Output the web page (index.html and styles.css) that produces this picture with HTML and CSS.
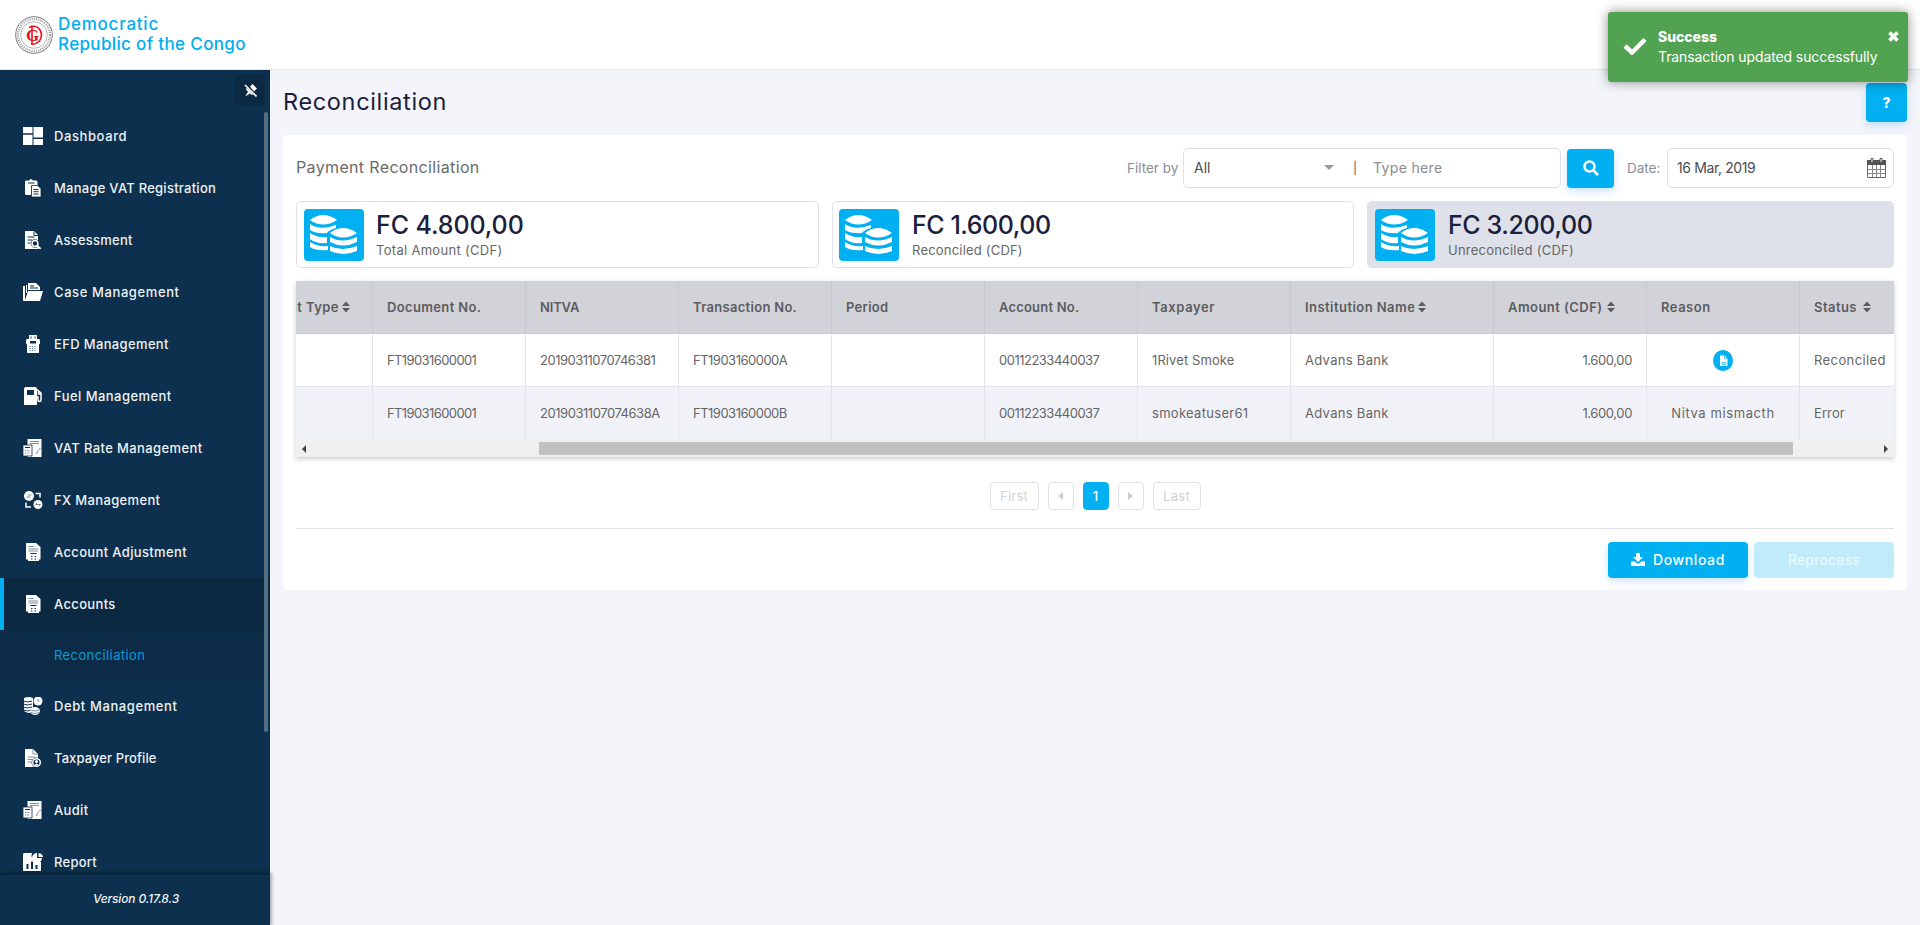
FILE: index.html
```html
<!DOCTYPE html>
<html lang="en">
<head>
<meta charset="utf-8">
<title>Reconciliation</title>
<link rel="stylesheet" href="styles.css">
</head>
<body>
<svg class="defs" width="0" height="0">
  <symbol id="i-dash" viewBox="0 0 20 18"><path d="M0 0h9.500v6.300H0zM10.500 0H20v10.500h-9.500zM0 7.700h9.500V18H0zM10.500 12H20v6h-9.500z"/></symbol>
  <symbol id="i-clip" viewBox="0 0 20 18"><path d="M3 1.500h3q2-3 4 0h3q1.500 0 1.500 1.500v4H8v9H3.500Q2 16 2 14.500V3q0-1.500 1-1.500z"/><path d="M5 4h6.500" class="cut"/><path d="M8.500 6.500h6l3.500 3v8.500H9.500q-1 0-1-1z" stroke="#0c304d" stroke-width=".8"/><path d="M10.500 10.500h5M10.500 12.700h5M10.500 15h5" class="cut"/></symbol>
  <symbol id="i-assess" viewBox="0 0 20 18"><path d="M2 0h9l4 4v14H2z"/><path d="M11 .5v4h4M4.500 6h7M4.500 9h5M4.500 12h3" class="cut"/><circle cx="12" cy="12.500" r="4.200" class="bg"/><circle cx="12" cy="12.500" r="2.900" class="ln"/><path d="M14 14.500l3.500 3.500" class="ln2"/></symbol>
  <symbol id="i-case" viewBox="0 0 20 18"><path d="M0 3h2v14l3-9h15l-3 10H0z"/><path d="M3 2h1v8H3zM5 0h8l4 4v3H5z"/><path d="M7 3h4M7 5h8" class="cut"/></symbol>
  <symbol id="i-efd" viewBox="0 0 20 18"><path d="M6 0h8v4h2q1 0 1 2v2.500l-1 1V18H4V9.500l-1-1V6q0-2 1-2h2z"/><path d="M8 1.500v2M12 1.500v2" class="cut"/><path d="M7 6h6v2.500H7z" class="bg"/><path d="M6.500 11.500h7M6.500 13.500h7M6.500 15.500h7" class="dots"/></symbol>
  <symbol id="i-fuel" viewBox="0 0 20 18"><path d="M3 0h9q2 0 2 2v16H1V2q0-2 2-2zM4 3v5h7V3z" fill-rule="evenodd"/><path d="M14 2.500l4 3.500v7q0 1.500-1.500 1.500T15 13v-3h-1M15.500 4v3h2" class="ln"/></symbol>
  <symbol id="i-vat" viewBox="0 0 20 18"><path d="M4.500 0h14v18h-14z"/><path d="M7 2.500h9M7 4.500h9" class="faint"/><path d="M13.500 15l1-3 3.500-3.500" class="faint"/><path d="M0 6h9v11H0z" stroke="#0c304d" stroke-width=".8"/><path d="M2 8.500h5" class="cut"/><path d="M2 11.500h5M2 14h5" class="dots"/></symbol>
  <symbol id="i-fx" viewBox="0 0 20 18"><circle cx="6" cy="5" r="5"/><circle cx="15" cy="13.500" r="4.500"/><path d="M12.500 2.500H17v4M3 11.500V16h5" class="ln"/><path d="M4.500 4h4M3.500 6h4M12.500 13.500l1.500-1.500M16 15l1.500-1.500M12.500 13.500h5" class="faint"/></symbol>
  <symbol id="i-acct" viewBox="0 0 20 18"><path d="M3 0h10l4.500 4v12.500H16V18H5v-1.500H3z"/><path d="M5.500 3.500h5M5.500 6h9.500M5.500 8h9.500" class="faint"/><path d="M7.500 10.500h6M8 13.500h1.500M11.500 13.500H13M8 16h1.500M11.500 16H13" class="cut"/></symbol>
  <symbol id="i-debt" viewBox="0 0 20 18"><path d="M1 1q5-2 9 0v13q-1 2-4 2-5-1-5-3z"/><path d="M0 4q5 2 9 0M0 7q5 2 9 0M0 10q5 2 9 0M1 13q4 2 7 0" class="cut"/><path d="M10 7.500h4v2.500h-4z" class="bg"/><circle cx="15" cy="4" r="4.500"/><path d="M15 2v2h1.500" class="faint"/><ellipse cx="12" cy="14" rx="5" ry="4"/><path d="M7.500 13q4 2 9 0M7.500 15.500q4 2 9 0" class="faint"/></symbol>
  <symbol id="i-tax" viewBox="0 0 20 18"><path d="M2 0h8l5 5v13H2z"/><path d="M10 0v5h5M4.500 8h8M4.500 10.500h5M4.500 13h4" class="faint"/><circle cx="13.500" cy="13.500" r="5" class="bg"/><circle cx="13.500" cy="13.500" r="3.800" class="ln"/><circle cx="13.500" cy="12.500" r="1.500"/><path d="M11.500 16.500q2-4 4 0z"/></symbol>
  <symbol id="i-report" viewBox="0 0 20 18"><path d="M1 0h8q-2 6 4 9h5v9H0V1z"/><path d="M4.500 16v-5M9 16V8.500M13.500 16v-4" class="cut2"/><path d="M14 0a5 5 0 1 0 5 5h-5z"/><path d="M15.500 0Q19.500.5 20 4h-4.500z"/></symbol>
  <symbol id="i-coins" viewBox="0 0 60 52"><path d="M6 11Q19 1 33 11Q19 20 6 11zM26 24Q39 14 53 24Q39 33 26 24z"/><path d="M6 15Q16 22 32 16V19Q25 21 23 24Q13 25 6 21zM6 24Q13 29 23 28V34Q12 35 6 30zM6 33Q13 38 24 37V41Q12 42 6 38zM26 28Q38 35 53 28V33Q39 40 26 33zM26 37Q38 43 53 37V42Q39 48 26 42z"/></symbol>
  <symbol id="i-sort" viewBox="0 0 8 12"><path d="M4 .5l4 4.500H0zM4 11.500L0 7h8z"/></symbol>
</svg>

<header class="topbar">
  <svg class="logo" viewBox="0 0 38 38" width="38" height="38"><circle cx="19" cy="19" r="18.300" class="ring"/><circle cx="19" cy="19" r="16" class="ring-text"/><circle cx="19" cy="19" r="13.300" class="ring thin"/><path d="M14 11.500q6-3 10.500 1.500 4 6 0 12-4 4-8.500 3M17 9.500v18" class="crest"/><text x="17.500" y="25" class="logo-g">G</text></svg>
  <div class="brand"><div class="ls75">Democratic</div><div class="ls35">Republic of the Congo</div></div>
</header>

<div class="shell">
  <aside class="sidebar">
    <div class="pin-row"><button class="pin"><svg viewBox="0 0 13 13" width="13" height="13"><path d="M6 2.500L8.500 0 13 4.500 10 7.500z"/><path d="M1 1l11.500 11.500" class="pin-ln"/><path d="M1.500 4.500h2l5 5v2l-2.500-2-5 3 3-4.500z"/></svg></button></div>
    <nav class="nav">
      <a class="item"><svg><use href="#i-dash"/></svg><span class="ls60">Dashboard</span></a>
      <a class="item"><svg><use href="#i-clip"/></svg><span class="ls25">Manage VAT Registration</span></a>
      <a class="item"><svg><use href="#i-assess"/></svg><span class="ls25">Assessment</span></a>
      <a class="item"><svg><use href="#i-case"/></svg><span class="ls60">Case Management</span></a>
      <a class="item"><svg><use href="#i-efd"/></svg><span class="ls35">EFD Management</span></a>
      <a class="item"><svg><use href="#i-fuel"/></svg><span class="ls45">Fuel Management</span></a>
      <a class="item"><svg><use href="#i-vat"/></svg><span class="ls40">VAT Rate Management</span></a>
      <a class="item"><svg><use href="#i-fx"/></svg><span class="ls35">FX Management</span></a>
      <a class="item"><svg><use href="#i-acct"/></svg><span class="ls35">Account Adjustment</span></a>
      <a class="item active"><svg><use href="#i-acct"/></svg><span class="ls35">Accounts</span></a>
      <a class="subitem"><span class="ls40">Reconciliation</span></a>
      <a class="item"><svg><use href="#i-debt"/></svg><span class="ls60">Debt Management</span></a>
      <a class="item"><svg><use href="#i-tax"/></svg><span class="ls10">Taxpayer Profile</span></a>
      <a class="item"><svg><use href="#i-vat"/></svg><span class="ls35">Audit</span></a>
      <a class="item"><svg><use href="#i-report"/></svg><span class="ls25">Report</span></a>
      <div class="nav-scroll"></div>
    </nav>
    <div class="version"><span class="lsm15">Version 0.17.8.3</span></div>
  </aside>

  <main class="main">
    <div class="title-row"><h1>Reconciliation</h1><button class="btn help">?</button></div>
    <section class="card">
      <div class="filters">
        <h2 class="ls35">Payment Reconciliation</h2>
        <label class="lbl">Filter by</label>
        <div class="field search"><span class="all">All</span><i class="caret"></i><span class="bar">|</span><span class="ph ls35">Type here</span></div>
        <button class="btn go"><svg viewBox="0 0 16 16" width="16" height="16"><circle cx="6.500" cy="6.500" r="5"/><path d="M10.500 10.500L15 15"/></svg></button>
        <label class="lbl date-lbl">Date:</label>
        <div class="field date"><span class="lsm40">16 Mar, 2019</span>
          <svg viewBox="0 0 19 20" width="19" height="20"><path d="M.5 2.500h18v17H.5z" fill="none" stroke="#666"/><path d="M0 2h19v5H0z" fill="#555"/><path d="M4 .5h2v4H4zM13 .5h2v4h-2z" fill="#fff" stroke="#555"/><path d="M1 11.500h17M1 15.500h17M5.500 7v12M9.500 7v12M13.500 7v12" stroke="#888" fill="none"/></svg></div>
      </div>
      <div class="stats">
        <div class="stat"><svg class="coins"><use href="#i-coins"/></svg><div><b class="lsm10">FC 4.800,00</b><small class="ls30">Total Amount (CDF)</small></div></div>
        <div class="stat"><svg class="coins"><use href="#i-coins"/></svg><div><b class="lsm45">FC 1.600,00</b><small class="ls20">Reconciled (CDF)</small></div></div>
        <div class="stat on"><svg class="coins"><use href="#i-coins"/></svg><div class="on-text"><b class="lsm40">FC 3.200,00</b><small class="ls25">Unreconciled (CDF)</small></div></div>
      </div>
      <div class="table-wrap">
        <div class="row head">
          <div class="c-first"><span class="ls45">Document Type</span><svg class="sort near"><use href="#i-sort"/></svg></div>
          <div><span class="ls35">Document No.</span></div><div><span class="lsm15">NITVA</span></div><div><span class="ls30">Transaction No.</span></div><div><span class="ls30">Period</span></div><div><span class="ls20">Account No.</span></div><div><span class="ls60">Taxpayer</span></div>
          <div><span class="ls45">Institution Name</span><svg class="sort near"><use href="#i-sort"/></svg></div><div><span class="ls45">Amount (CDF)</span><svg class="sort"><use href="#i-sort"/></svg></div><div><span class="ls50">Reason</span></div><div><span class="ls45">Status</span><svg class="sort far"><use href="#i-sort"/></svg></div>
        </div>
        <div class="row">
          <div></div><div><span class="lsm60">FT19031600001</span></div><div><span class="lsm50">20190311070746381</span></div><div><span class="lsm50">FT1903160000A</span></div><div></div><div><span class="lsm50">00112233440037</span></div><div><span class="ls10">1Rivet Smoke</span></div><div><span class="ls30">Advans Bank</span></div><div class="r"><span class="lsm40">1.600,00</span></div><div class="c"><svg class="doc" viewBox="0 0 20 21"><ellipse cx="10" cy="10.500" rx="10" ry="10.500" fill="#00b0f0"/><path d="M7 5.500h4.500l3 3v7.500H7z" fill="#fff"/><path d="M11.500 5.500v3h3M9 12.500h4v2H9z" fill="none" stroke="#00b0f0" stroke-width=".7"/></svg></div><div><span class="ls40">Reconciled</span></div>
        </div>
        <div class="row alt">
          <div></div><div><span class="lsm60">FT19031600001</span></div><div><span class="lsm45">2019031107074638A</span></div><div><span class="lsm50">FT1903160000B</span></div><div></div><div><span class="lsm50">00112233440037</span></div><div><span class="ls30">smokeatuser61</span></div><div><span class="ls30">Advans Bank</span></div><div class="r"><span class="lsm40">1.600,00</span></div><div class="c"><span class="ls60">Nitva mismacth</span></div><div><span class="ls10">Error</span></div>
        </div>
        <div class="hscroll"><i class="al"></i><i class="thumb"></i><i class="ar"></i></div>
      </div>
      <div class="pager"><span class="pg first ls20">First</span><span class="pg sq"><i class="pl"></i></span><span class="pg sq cur">1</span><span class="pg sq"><i class="pr"></i></span><span class="pg last ls30">Last</span></div>
      <div class="actions"><button class="btn dl"><svg viewBox="0 0 14 13" width="14" height="13"><path d="M5 0h4v4h3L7 9 2 4h3zM0 8.500h3.500L7 11l3.500-2.500H14V13H0z"/></svg><span class="ls60">Download</span></button><button class="btn rp"><span class="rp-label">Reprocess</span></button></div>
    </section>
  </main>
</div>

<div class="toast">
  <svg class="check" viewBox="0 0 24 18" width="24" height="18"><path d="M2 9l7 6.500L22 2.500"/></svg>
  <div><strong>Success</strong><p class="lsm10">Transaction updated successfully</p></div>
  <svg class="close" viewBox="0 0 11 11" width="11" height="11"><path d="M1.500 1.500l8 8M9.500 1.500l-8 8"/></svg>
</div>
</body>
</html>
```
FILE: styles.css
```css
* { box-sizing: border-box; }
body { margin: 0; height: 925px; overflow: hidden; background: #f4f5fa; color: #5f5f66; font-family: Inter, "Open Sans", sans-serif; font-size: 13px; }
button { font-family: inherit; border: 0; }
h1, h2, p { margin: 0; font-weight: 400; }
.defs { position: absolute; }

/* tracking steps, in hundredths of a pixel */
.ls10 { letter-spacing: .1px; }
.ls20 { letter-spacing: .2px; }
.ls25 { letter-spacing: .25px; }
.ls30 { letter-spacing: .3px; }
.ls35 { letter-spacing: .35px; }
.ls40 { letter-spacing: .4px; }
.ls45 { letter-spacing: .45px; }
.ls50 { letter-spacing: .5px; }
.ls60 { letter-spacing: .6px; }
.ls75 { letter-spacing: .75px; }
.lsm10 { letter-spacing: -.1px; }
.lsm15 { letter-spacing: -.15px; }
.lsm40 { letter-spacing: -.38px; }
.lsm45 { letter-spacing: -.45px; }
.lsm50 { letter-spacing: -.5px; }
.lsm60 { letter-spacing: -.6px; }

.topbar { height: 70px; background: #fff; border-bottom: 1px solid #e2e5ec; display: flex; align-items: center; padding: 0 15px; gap: 5px; }
.ring { fill: none; stroke: #555; stroke-width: .8; }
.thin { stroke-width: .6; stroke: #888; }
.ring-text { fill: none; stroke: #999; stroke-width: 2.200; stroke-dasharray: 1 1.200; }
.crest { fill: none; stroke: #e8141e; stroke-width: 1.600; }
.logo-g { fill: #e8141e; font-family: "Liberation Serif", serif; font-weight: 700; font-size: 17px; text-anchor: middle; }
.brand { color: #00aeef; font-size: 17px; font-weight: 500; line-height: 20px; padding-bottom: 2px; }
.shell { display: flex; height: 855px; }
.sidebar { width: 270px; background: #0c304d; display: flex; flex-direction: column; }
.pin-row { height: 40px; flex: none; padding: 5px 5px 0 0; display: flex; justify-content: flex-end; }
.pin { width: 30px; height: 30px; background: #0b2942; padding: 0; display: grid; place-items: center; border-radius: 2px; }
.pin svg { fill: #fff; }
.pin-ln { stroke: #fff; stroke-width: 1.600; }
.nav { position: relative; height: 763px; overflow: hidden; flex: none; }
.item { height: 52px; display: flex; align-items: center; gap: 11px; padding-left: 23px; color: #eef2f5; font-weight: 500; }
.item svg { width: 20px; height: 18px; fill: #fff; }
.cut { fill: none; stroke: #0c304d; stroke-width: 1; }
.faint { fill: none; stroke: #7d90a0; stroke-width: 1; }
.dots { fill: none; stroke: #5d7488; stroke-width: 1; stroke-dasharray: 1.200 1.200; }
.cut2 { stroke: #0c304d; stroke-width: 2; }
.ln { fill: none; stroke: #fff; stroke-width: 1.500; }
.ln2 { stroke: #fff; stroke-width: 2.200; }
.bg { fill: #0c304d; }
.item.active { background: #0b2a42; border-left: 4px solid #00b0f0; padding-left: 19px; }
.subitem { height: 50px; display: flex; align-items: center; padding-left: 54px; background: #0b2b47; color: #0b9cd8; }
.nav-scroll { position: absolute; left: 264px; top: 2px; width: 4px; height: 620px; background: #546e82; border-radius: 2px; }
.version { flex: 1; display: grid; place-items: center; padding: 0 0 3px 2px; color: #eef2f5; font-style: italic; font-weight: 500; font-size: 12px; border-top: 2px solid #0a2740; box-shadow: 2px 0 3px rgba(0,0,0,.3); }
.main { flex: 1; padding: 12px 13px 0; }
.title-row { display: flex; justify-content: space-between; height: 53px; }
h1 { font-size: 23.500px; line-height: 40px; color: #1b203c; letter-spacing: .65px; }
.btn { background: #00b0f0; color: #fff; border-radius: 4px; box-shadow: 0 3px 8px rgba(0,123,255,.22); display: flex; align-items: center; justify-content: center; padding: 0; }
.help { width: 41px; height: 39px; margin-top: 1px; font-size: 14px; font-weight: 800; }
.card { background: #fff; border-radius: 5px; height: 455px; padding: 13px 13px 0; }
.filters { display: flex; align-items: center; height: 40px; }
h2 { font-size: 16px; flex: 1; color: #6a6a6a; padding-bottom: 2px; }
.lbl { color: #8a8d94; font-size: 13.500px; width: 56px; }
.field { height: 40px; border: 1px solid #dfe1e8; border-radius: 5px; display: flex; align-items: center; color: #4c4c52; font-size: 14px; padding-bottom: 1px; }
.search { width: 378px; padding-left: 10px; margin-right: 6px; }
.all { width: 130px; }
.caret { border: 5px solid transparent; border-top-color: #999; border-bottom: 0; width: 10px; }
.bar { margin: 0 16px 0 19px; font-size: 12px; }
.ph { color: #888b92; }
.go { width: 47px; height: 39px; margin-right: 13px; }
.go svg { fill: none; stroke: #fff; stroke-width: 2.500; }
.date-lbl { width: 40px; }
.date { width: 227px; padding: 0 7px 1px 9px; justify-content: space-between; }
.stats { display: grid; grid-template-columns: 523px 522px 527px; gap: 13px; margin-top: 13px; }
.stat { height: 67px; border: 1px solid #dfe1e8; border-radius: 5px; padding: 7px; display: flex; gap: 12px; }
.stat:nth-child(2) { padding-left: 6px; gap: 13px; }
.on { background: #dee1ea; }
.on-text { padding-left: 1px; }
.coins { width: 60px; height: 52px; background: #00b0f0; border-radius: 4px; fill: #fff; }
.stat b { display: block; font-weight: 450; color: #1b203c; font-size: 25px; line-height: 32px; }
.stat small { display: block; font-size: 13px; line-height: 18px; color: #666; }
.table-wrap { margin-top: 13px; overflow: hidden; box-shadow: 0 2px 5px rgba(0,0,0,.2); height: 176px; }
.row { display: grid; grid-template-columns: 77px 153px 153px 153px 153px 153px 153px 203px 153px 153px 94px; height: 53px; background: #fff; color: #666; }
.row > div { border-right: 1px solid #e4e5ea; border-bottom: 1px solid #e4e5ea; padding: 0 14px; display: flex; align-items: center; white-space: nowrap; }
.row > div:last-child { border-right: 0; }
.head { background: #d2d3d8; font-weight: 600; color: #5c5c60; }
.head > div { border-color: #c8c9d0; }
.row > .c-first { justify-content: flex-end; padding-right: 22px; }
.alt { background: #f1f2f8; }
.row.alt > div { border-bottom: 0; padding-bottom: 1px; }
.row > .r { justify-content: flex-end; }
.row > .c { justify-content: center; }
.sort { width: 8px; height: 12px; fill: #5c5c60; margin-left: 4px; flex: none; }
.near { margin-left: 3px; }
.far { margin-left: 6px; }
.doc { width: 20px; height: 21px; }
.hscroll { height: 17px; background: #f0f0f0; display: flex; align-items: center; padding: 0 6px; }
.al, .ar, .pl, .pr { border: 4px solid transparent; }
.al { border-right-color: #444; border-left: 0; }
.ar { border-left-color: #444; border-right: 0; }
.thumb { width: 1254px; height: 13px; background: #c1c1c1; margin: 0 auto 0 233px; }
.pager { display: flex; justify-content: center; gap: 9px; margin: 25px 0 0; height: 28px; }
.pg { border: 1px solid #dfe1e6; border-radius: 4px; height: 28px; display: grid; place-items: center; color: #cfd2d8; padding-bottom: 1px; }
.first { width: 49px; }
.last { width: 48px; }
.sq { width: 26px; }
.cur { background: #00b0f0; border-color: #00b0f0; color: #fff; font-weight: 500; }
.pl { border-right: 5px solid #cdd0d8; border-left: 0; }
.pr { border-left: 5px solid #cdd0d8; border-right: 0; }
.actions { margin-top: 18px; border-top: 1px solid #dfe1ea; padding-top: 13px; display: flex; justify-content: flex-end; gap: 6px; }
.actions .btn { width: 140px; height: 36px; font-size: 14px; font-weight: 500; gap: 8px; padding-bottom: 1px; }
.dl svg { fill: #fff; }
.actions .rp { background: #bfebfb; color: #eaf8fe; box-shadow: none; }
.rp-label { letter-spacing: .15px; }
.toast { position: absolute; left: 1608px; top: 12px; width: 300px; height: 70px; background: #51a351; border-radius: 3px; box-shadow: 0 0 12px rgba(0,0,0,.45); color: #fff; display: flex; padding: 15px 9px 0 15px; font-size: 14px; line-height: 20px; }
.toast > div { flex: 1; margin-left: 11px; white-space: nowrap; }
.check { margin-top: 10px; fill: none; stroke: #fff; stroke-width: 4.500; }
.close { margin-top: 4px; fill: none; stroke: #fff; stroke-width: 3.800; }
.toast strong { font-weight: 800; display: block; letter-spacing: -.05px; }
```
